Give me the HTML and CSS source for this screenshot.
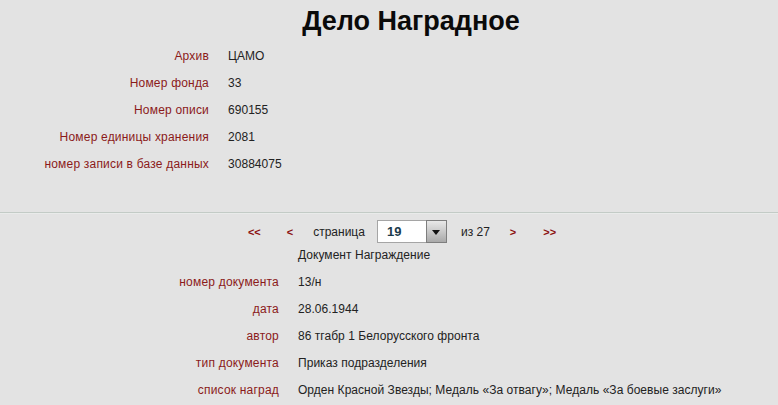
FILE: index.html
```html
<!DOCTYPE html>
<html>
<head>
    <meta charset="UTF-8">
    <link rel="stylesheet" href="styles.css">
</head>
<body>
<div class="page">
    <h1 class="title">Дело Наградное</h1>

    <div class="info info-case">
        <div class="label">Архив</div>
        <div class="value">ЦАМО</div>
        <div class="label">Номер фонда</div>
        <div class="value">33</div>
        <div class="label">Номер описи</div>
        <div class="value">690155</div>
        <div class="label">Номер единицы хранения</div>
        <div class="value">2081</div>
        <div class="label">номер записи в базе данных</div>
        <div class="value">30884075</div>
    </div>

    <hr class="divider">

    <div class="pager">
        <a class="pager-link first">&lt;&lt;</a>
        <a class="pager-link prev">&lt;</a>
        <span class="pager-text">страница</span>
        <div class="page-select">
            <span class="page-select-value">19</span>
            <span class="page-select-button"><span class="arrow"></span></span>
        </div>
        <span class="pager-text total">из 27</span>
        <a class="pager-link next">&gt;</a>
        <a class="pager-link last">&gt;&gt;</a>
    </div>

    <div class="info info-doc">
        <div class="label"></div>
        <div class="value">Документ Награждение</div>
        <div class="label">номер документа</div>
        <div class="value">13/н</div>
        <div class="label">дата</div>
        <div class="value">28.06.1944</div>
        <div class="label">автор</div>
        <div class="value">86 тгабр 1 Белорусского фронта</div>
        <div class="label">тип документа</div>
        <div class="value">Приказ подразделения</div>
        <div class="label">список наград</div>
        <div class="value">Орден Красной Звезды; Медаль «За отвагу»; Медаль «За боевые заслуги»</div>
    </div>
</div>
</body>
</html>
```

FILE: styles.css
```css
* {
    margin: 0;
    padding: 0;
    box-sizing: border-box;
}

body {
    background: #e3e3e3;
    color: #222;
    font-family: 'Liberation Sans', Arial, sans-serif;
    font-size: 12px;
    overflow: hidden;
}

.page {
    width: 778px;
    padding-top: 3px;
}

.title {
    text-align: center;
    font-size: 27px;
    line-height: 36px;
    font-weight: bold;
    color: #0a0a0a;
    padding-left: 44px;
}

.info {
    display: grid;
    column-gap: 19px;
    grid-auto-rows: 27px;
    align-items: center;
}

.info-case {
    grid-template-columns: 209px 1fr;
    margin-top: 3px;
}

.info-doc {
    grid-template-columns: 279px 1fr;
    margin-top: -2px;
}

.label {
    text-align: right;
    color: #8b1a1a;
    letter-spacing: 0.2px;
}

.value {
    color: #222;
    letter-spacing: 0.04px;
}

.divider {
    border: none;
    border-top: 1px solid #c3cbc6;
    border-bottom: 1px solid #e9ebea;
    margin-top: 35px;
}

.pager {
    display: flex;
    align-items: center;
    justify-content: center;
    padding-left: 26px;
    margin-top: 6px;
    height: 23px;
}

.pager-link {
    color: #8b1010;
    font-weight: bold;
    font-size: 11px;
    cursor: pointer;
}

.first { margin-right: 26px; }
.prev { margin-right: 20px; }
.pager-text { color: #222; }
.total { margin-left: 14px; margin-right: 20px; }
.last { margin-left: 27px; }

.page-select {
    display: flex;
    height: 23px;
    margin-left: 12px;
}

.page-select-value {
    width: 49px;
    background: #fff;
    border: 1px solid #a5a5a5;
    border-right: none;
    padding-left: 9px;
    line-height: 21px;
    font-size: 13px;
    font-weight: bold;
    color: #1c3b4c;
}

.page-select-button {
    width: 21px;
    border: 1px solid #7e7e7e;
    background: linear-gradient(#e9e9e9, #a9a9a9);
    display: flex;
    align-items: center;
    justify-content: center;
}

.arrow {
    width: 0;
    height: 0;
    border-left: 4px solid transparent;
    border-right: 4px solid transparent;
    border-top: 5px solid #111;
    margin-top: 1px;
}
```
